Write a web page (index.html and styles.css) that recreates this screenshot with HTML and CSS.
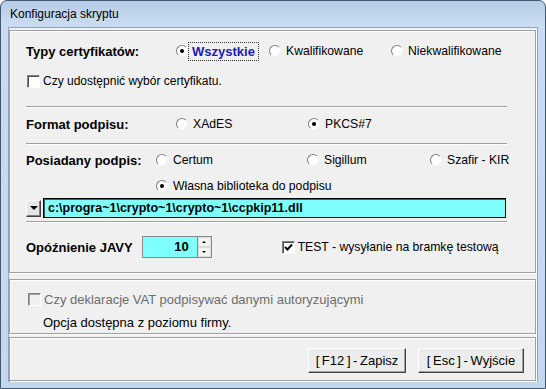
FILE: index.html
```html
<!DOCTYPE html>
<html lang="pl">
<head>
    <meta charset="UTF-8">
    <title>Konfiguracja skryptu</title>
    <link rel="stylesheet" href="styles.css">
</head>
<body>
    <div class="window">
        <div class="titlebar">Konfiguracja skryptu</div>
        <div class="client">
            <section class="panel panel-main">
                <div class="row row-types">
                    <span class="caption col-150">Typy certyfikatów:</span>
                    <label class="opt col-93"><span class="radio checked"></span><span class="focus">Wszystkie</span></label>
                    <label class="opt col-122"><span class="radio"></span>Kwalifikowane</label>
                    <label class="opt"><span class="radio"></span>Niekwalifikowane</label>
                </div>
                <div class="row row-share">
                    <label class="opt opt-small"><span class="check"></span>Czy udostępnić wybór certyfikatu.</label>
                </div>
                <div class="sep sep-first"></div>
                <div class="row row-format">
                    <span class="caption col-150">Format podpisu:</span>
                    <label class="opt col-132"><span class="radio"></span>XAdES</label>
                    <label class="opt"><span class="radio checked"></span>PKCS#7</label>
                </div>
                <div class="sep"></div>
                <div class="row row-sign">
                    <span class="caption col-130">Posiadany podpis:</span>
                    <label class="opt col-151"><span class="radio"></span>Certum</label>
                    <label class="opt col-123"><span class="radio"></span>Sigillum</label>
                    <label class="opt"><span class="radio"></span>Szafir - KIR</label>
                </div>
                <div class="row row-own">
                    <label class="opt"><span class="radio checked"></span>Własna biblioteka do podpisu</label>
                </div>
                <div class="row row-lib">
                    <span class="drop-btn"><span class="arrow-down"></span></span>
                    <span class="lib-field">c:\progra~1\crypto~1\crypto~1\ccpkip11.dll</span>
                </div>
                <div class="sep sep-last"></div>
                <div class="row row-java">
                    <span class="caption caption-java">Opóźnienie JAVY</span>
                    <span class="spin">
                        <span class="spin-field">10</span>
                        <span class="spin-btns">
                            <span class="spin-btn"><span class="tri-up"></span></span>
                            <span class="spin-btn"><span class="tri-down"></span></span>
                        </span>
                    </span>
                    <label class="opt opt-test"><span class="check checked">
                        <svg width="9" height="9" viewBox="0 0 9 9"><path d="M1 4 L3.5 6.5 L8 1.5" fill="none" stroke="#000" stroke-width="2"/></svg>
                    </span>TEST - wysyłanie na bramkę testową</label>
                </div>
            </section>
            <section class="panel panel-vat">
                <div class="row row-small">
                    <label class="opt disabled"><span class="check"></span>Czy deklaracje VAT podpisywać danymi autoryzującymi</label>
                </div>
                <div class="row row-small">
                    <span class="note">Opcja dostępna z poziomu firmy.</span>
                </div>
            </section>
            <section class="panel panel-buttons">
                <button class="btn btn-save">[ F12 ] - Zapisz</button>
                <button class="btn btn-exit">[ Esc ] - Wyjście</button>
            </section>
        </div>
    </div>
</body>
</html>
```

FILE: styles.css
```css
body {
    margin: 0;
    background: #fff;
    font: 13px "Liberation Sans", Arial, sans-serif;
    color: #000;
}
.window {
    width: 546px;
    height: 389px;
    box-sizing: border-box;
    border: 1px solid #43576d;
    border-radius: 7px 7px 0 0;
    background: linear-gradient(#b6cde7, #c9dcf1 24px, #c3d8ee);
    padding: 0 7px 6px;
    display: flex;
    flex-direction: column;
}
.titlebar {
    height: 26px;
    line-height: 27px;
    padding-left: 2px;
    font-size: 12px;
    color: #000;
}
.client {
    flex: 1;
    background: #f0f0f0;
    border: 1px solid #8ea5bf;
    padding: 2px 0 0;
    display: flex;
    flex-direction: column;
}
.panel {
    border: 1px solid #a0a0a0;
    box-shadow: inset 1px 1px 0 #fff, 1px 1px 0 #fff;
    margin: 0 1px 0 0;
}
.panel-main {
    padding: 7px 28px 2px 16px;
}
.panel-vat {
    margin-top: 6px;
    padding: 8px 16px 0 17px;
}
.panel-buttons {
    margin-top: 3px;
    flex: 1;
    display: flex;
    justify-content: flex-end;
    align-items: flex-start;
    gap: 12px;
    padding: 10px 11px 0 0;
}
.row {
    display: flex;
    align-items: center;
}
.row-types { height: 26px; }
.row-share { height: 34px; }
.row-format { height: 32px; }
.row-sign { height: 30px; }
.row-own { height: 22px; padding-left: 130px; }
.row-lib { height: 20px; margin-top: 1px; }
.row-java { height: 46px; margin-top: 1px; }
.row-small { height: 22px; }
.row-small + .row-small { margin-top: 1px; }

.sep {
    height: 1px;
    background: #a0a0a0;
    border-bottom: 1px solid #fff;
    margin-top: 3px;
}
.sep-first { margin-top: 8px; }
.sep-last { margin-top: 3px; }

.caption {
    font-weight: bold;
    white-space: nowrap;
    flex: none;
}
.col-150 { width: 150px; flex: none; }
.col-130 { width: 130px; flex: none; }
.col-93 { width: 93px; flex: none; }
.col-122 { width: 122px; flex: none; }
.col-132 { width: 132px; flex: none; }
.col-151 { width: 151px; flex: none; }
.col-123 { width: 123px; flex: none; }

.opt {
    display: flex;
    align-items: center;
    white-space: nowrap;
    font-size: 12.2px;
}
.opt-small {
    font-size: 12px;
}
.radio {
    width: 12px;
    height: 12px;
    box-sizing: border-box;
    border-radius: 50%;
    border: 1px solid;
    border-color: #808080 #f4f4f4 #f4f4f4 #808080;
    background: #fff;
    margin-right: 5px;
    position: relative;
    flex: none;
}
.radio.checked::after {
    content: "";
    position: absolute;
    left: 3px;
    top: 3px;
    width: 4px;
    height: 4px;
    border-radius: 50%;
    background: #000;
}
.focus {
    color: #1c1cb0;
    font-weight: bold;
    font-size: 13px;
    border: 1px dotted #333;
    padding: 1px 3px;
    margin-left: -5px;
}
.check {
    width: 13px;
    height: 13px;
    box-sizing: border-box;
    border: 1px solid;
    border-color: #808080 #fff #fff #808080;
    box-shadow: inset 1px 1px 0 #505050;
    background: #fff;
    margin: 0 3px 0 1px;
    display: flex;
    align-items: center;
    justify-content: center;
    flex: none;
}
.check svg {
    margin: 1px 0 0 1px;
}
.disabled {
    color: #6d6d6d;
    font-size: 13px;
}
.disabled .check {
    background: #f0f0f0;
    box-shadow: inset 1px 1px 0 #a0a0a0;
}
.note {
    padding-left: 16px;
}

.drop-btn {
    width: 15px;
    height: 17px;
    box-sizing: border-box;
    border: 1px solid;
    border-color: #fff #404040 #404040 #fff;
    box-shadow: inset -1px -1px 0 #808080;
    background: #e6e6e6;
    display: flex;
    align-items: center;
    justify-content: center;
    margin-right: 2px;
}
.arrow-down {
    width: 0;
    height: 0;
    border-left: 4px solid transparent;
    border-right: 4px solid transparent;
    border-top: 4px solid #000;
}
.lib-field {
    width: 463px;
    height: 20px;
    box-sizing: border-box;
    border: 1px solid #000;
    box-shadow: inset 1px 1px 0 #3a6060;
    background: #80ffff;
    font-weight: bold;
    font-size: 12.5px;
    line-height: 18px;
    padding-left: 4px;
}

.spin {
    display: flex;
    margin-left: 9px;
    height: 22px;
}
.spin-field {
    width: 55px;
    box-sizing: border-box;
    border: 1px solid #8a8a8a;
    border-right: none;
    background: #80ffff;
    font-weight: bold;
    text-align: right;
    line-height: 20px;
    padding-right: 8px;
}
.spin-btns {
    display: flex;
    flex-direction: column;
    width: 15px;
    border: 1px solid #8a8a8a;
    box-sizing: border-box;
    background: #fff;
}
.spin-btn {
    flex: 1;
    display: flex;
    align-items: center;
    justify-content: center;
    background: #f2f2f2;
    border: 1px solid #dcdcdc;
}
.tri-up,
.tri-down {
    width: 0;
    height: 0;
    border-left: 2px solid transparent;
    border-right: 2px solid transparent;
}
.tri-up { border-bottom: 2px solid #000; }
.tri-down { border-top: 2px solid #000; }
.opt-test {
    margin-left: 69px;
}

.btn {
    font: 13px "Liberation Sans", Arial, sans-serif;
    word-spacing: -1px;
    height: 25px;
    padding: 0;
    background: #ececec;
    border: 1px solid;
    border-color: #fff #404040 #404040 #fff;
    box-shadow: inset -1px -1px 0 #a0a0a0;
    color: #000;
}
.btn-save { width: 98px; }
.btn-exit { width: 106px; }
```
